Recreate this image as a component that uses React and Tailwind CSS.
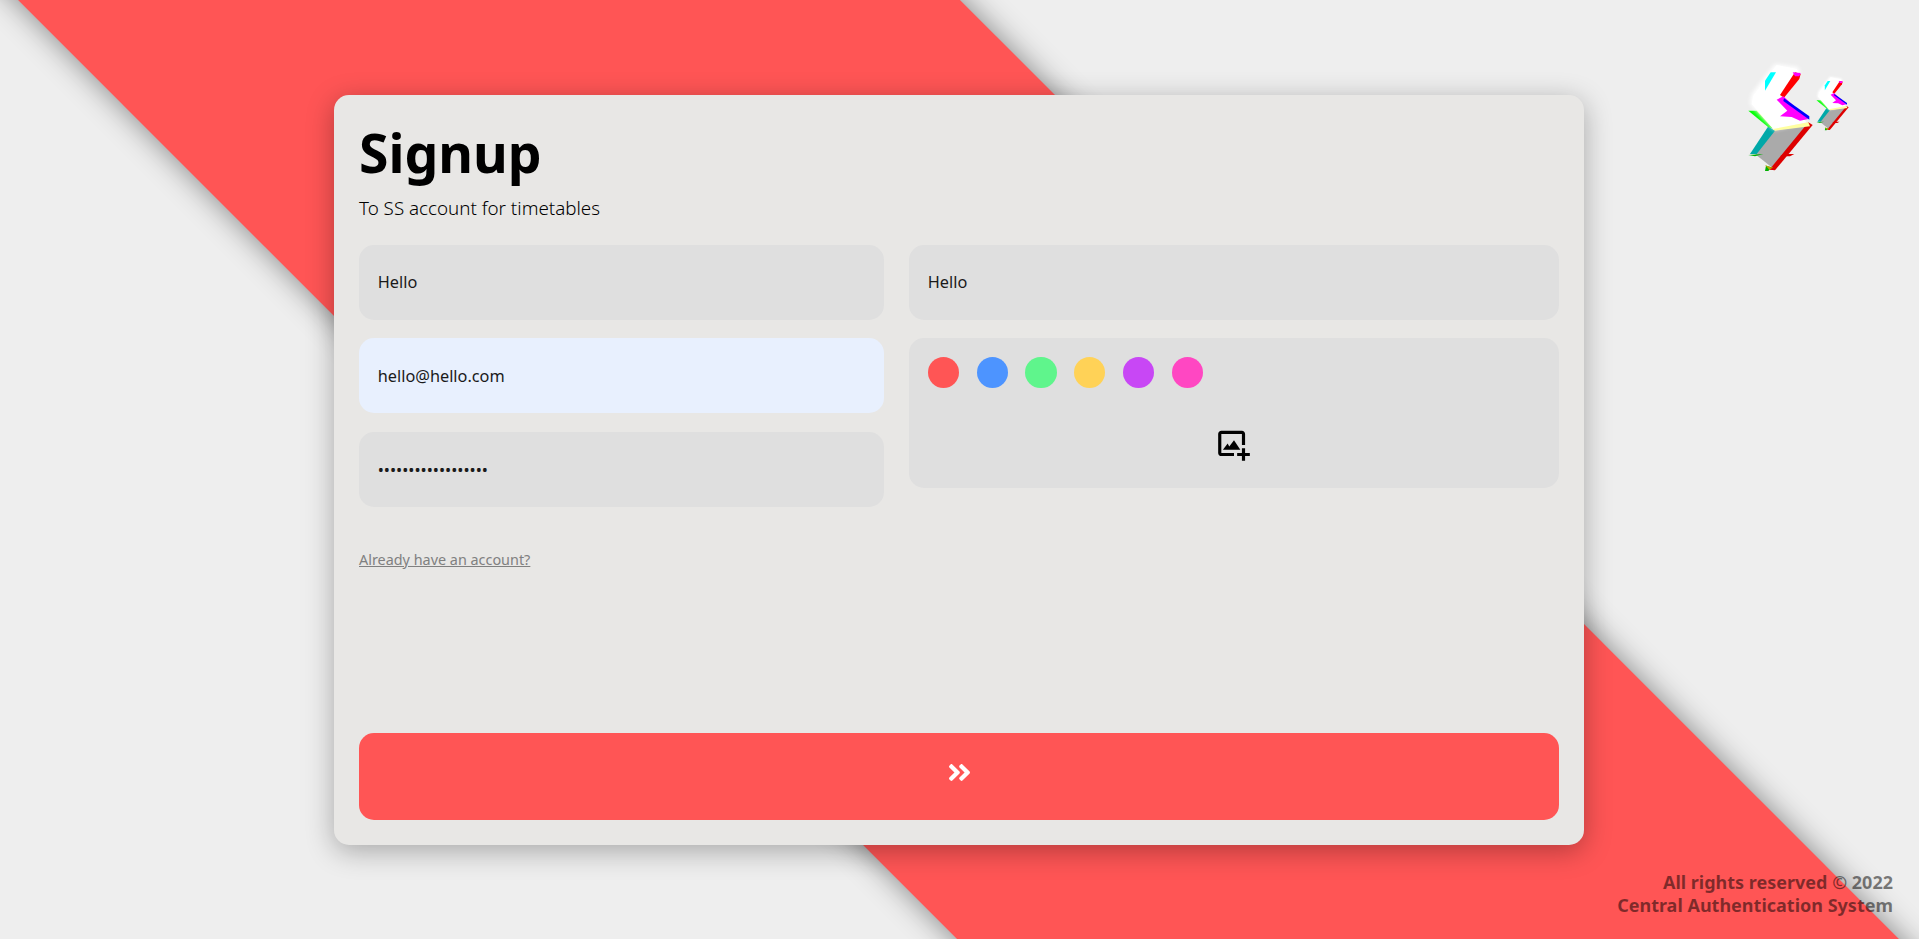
import React from 'react';
import { BiImageAdd } from 'react-icons/bi';
import { FaAngleDoubleRight } from 'react-icons/fa';

const swatches = ['bg-[#ff5555]', 'bg-[#4d94ff]', 'bg-[#5ff58c]', 'bg-[#ffd257]', 'bg-[#c847f5]', 'bg-[#ff47c2]'];

const GlitchMark = () => (
  <g>
    <polygon points="215,275 330,258 215,385 165,345" fill="#aaaaaa" />
    <polygon points="205,262 225,275 170,345 150,345" fill="#00a8a8" />
    <polygon points="145,348 190,345 165,352" fill="#00b000" />
    <polygon points="198,380 215,385 205,396 195,396" fill="#00b000" />
    <polygon points="325,250 338,258 225,394 208,392" fill="#dd0000" />
    <polygon points="250,345 283,345 270,352 240,352" fill="#dd0000" />
    <polygon points="195,378 212,385 220,385 208,392" fill="#b8a800" />
    <polygon points="145,215 178,215 238,272 205,265" fill="#00ff00" />
    <polygon points="170,215 195,215 228,262 220,270" fill="#ffff66" />
    <polygon points="225,75 295,85 300,105 240,170 320,250 222,272 150,195 155,165" fill="#ffffff" style={{ filter: 'blur(6px)' }} />
    <polygon points="230,78 290,90 300,105 240,170 320,250 222,272 155,195 160,170" fill="#ffffff" />
    <polygon points="218,270 325,250 330,262 225,275" fill="#ffffa0" />
    <polygon points="285,100 302,105 298,120 252,176 240,168" fill="#ff0000" />
    <polygon points="278,100 302,102 298,112 285,112" fill="#ff00ff" />
    <polygon points="230,182 250,172 325,240 300,245 275,234 240,232 262,215" fill="#ff00ff" />
    <polygon points="252,178 328,232 328,242 250,186" fill="#0000ff" />
    <polygon points="212,100 228,100 195,155 195,125" fill="#00ffff" />
  </g>
);

const Logo = () => (
  <svg className="absolute top-[39px] left-[1700px] h-[150px] w-[180px] overflow-visible" viewBox="0 0 540 450">
    <GlitchMark />
    <g transform="translate(277 76) scale(0.5)">
      <GlitchMark />
    </g>
  </svg>
);

const Field = ({ value, type = 'text', className = 'bg-[#dfdfdf]' }) => (
  <input
    type={type}
    value={value}
    readOnly
    className={`h-[75px] w-full rounded-[15px] px-[18.75px] text-[16.3px] text-[#1a1a1a] outline-none ${className}`}
  />
);

const App = () => {
  return (
    <div className="relative h-screen overflow-hidden bg-[#eeeeee] font-['Noto_Sans',sans-serif]">
      <div className="absolute left-[calc(50%-1px)] top-1/2 h-[3000px] w-[666px] -translate-x-1/2 -translate-y-1/2 -rotate-45 bg-[#ff5555] shadow-[0_0_30px_rgba(0,0,0,0.45)]" />
      <Logo />

      <div className="relative flex h-full items-center justify-center pr-[1px]">
        <div className="flex h-[750px] w-[1250px] flex-col rounded-[15px] bg-[#e8e7e5] p-[25px] shadow-[0_6px_28px_rgba(0,0,0,0.3)]">
          <h1 className="-mt-[3px] text-[53.5px] font-bold leading-[72px] text-black">Signup</h1>
          <p className="mt-[6px] text-[18.8px] font-light leading-[26px] text-black">To SS account for timetables</p>

          <div className="mt-[24px] grid grid-cols-[525px_650px] gap-[25px]">
            <div className="flex flex-col gap-[18.75px]">
              <Field value="Hello" />
              <Field value="hello@hello.com" className="bg-[#e8f0fe]" />
              <Field value="••••••••••••••••••" type="password" />
            </div>
            <div className="flex flex-col gap-[18.75px]">
              <Field value="Hello" />
              <div className="h-[150px] rounded-[15px] bg-[#dfdfdf] p-[18.75px]">
                <div className="flex gap-[17.5px]">
                  {swatches.map((swatch) => (
                    <span key={swatch} className={`h-[31.25px] w-[31.25px] rounded-full ${swatch}`} />
                  ))}
                </div>
                <div className="mt-[37.5px] flex justify-center">
                  <BiImageAdd className="h-[38px] w-[38px] text-black" />
                </div>
              </div>
            </div>
          </div>

          <a href="#" className="mt-[42.5px] text-[14.4px] leading-[20px] text-[#808080] underline">
            Already have an account?
          </a>

          <button className="mt-auto flex h-[87px] w-full items-center justify-center rounded-[15px] bg-[#ff5555] pb-[7px] text-white">
            <FaAngleDoubleRight className="h-[27px] w-[27px]" />
          </button>
        </div>
      </div>

      <div className="absolute bottom-[22px] right-[26px] text-right text-[18px] font-bold leading-[23px] text-black/50">
        <p>All rights reserved © 2022</p>
        <p>Central Authentication System</p>
      </div>
    </div>
  );
};

export default App;
